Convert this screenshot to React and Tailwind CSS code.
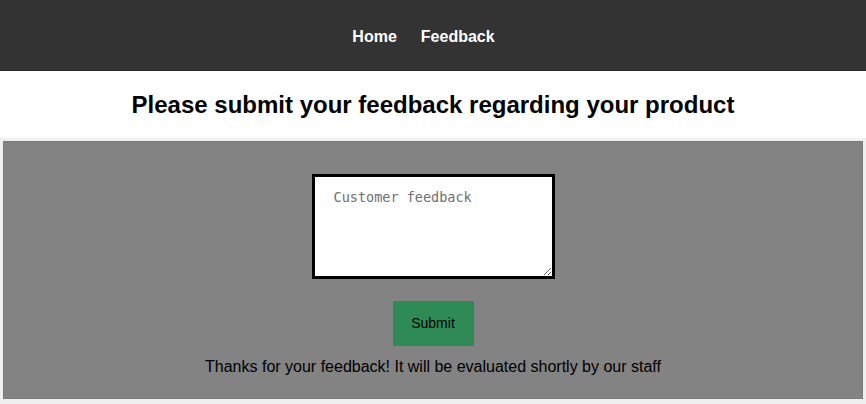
export default function App() {
  return (
    <div className="min-h-[404px] bg-[#f0f0f0] font-['Liberation_Sans',Arial,sans-serif] text-black">
      <nav className="flex h-[71px] items-center justify-center gap-6 border-b border-[#2a2a2a] bg-[#333333] pr-[19px] pt-[3px]">
        <a href="#" className="text-[16px] font-bold text-white">Home</a>
        <a href="#" className="text-[16px] font-bold text-white">Feedback</a>
      </nav>

      <header className="flex h-[67px] items-center justify-center bg-white">
        <h1 className="text-[24px] font-bold">Please submit your feedback regarding your product</h1>
      </header>

      <main className="mx-[3px] mt-[3px] flex h-[258px] flex-col items-center border border-[#7a7a7a] bg-[#838383] pt-[32px]">
        <textarea
          placeholder="Customer feedback"
          className="h-[105px] w-[243px] border-[3px] border-black bg-white px-[19px] pb-[8px] pt-[10px] font-['DejaVu_Sans_Mono',monospace] text-[13.5px] placeholder:text-[#6f6f6f]"
        />
        <button className="mt-[22px] h-[45px] w-[81px] bg-[#2e8b57] text-[14px] text-black">Submit</button>
        <p className="mt-[9px] text-[16px]">Thanks for your feedback! It will be evaluated shortly by our staff</p>
      </main>
    </div>
  );
}
